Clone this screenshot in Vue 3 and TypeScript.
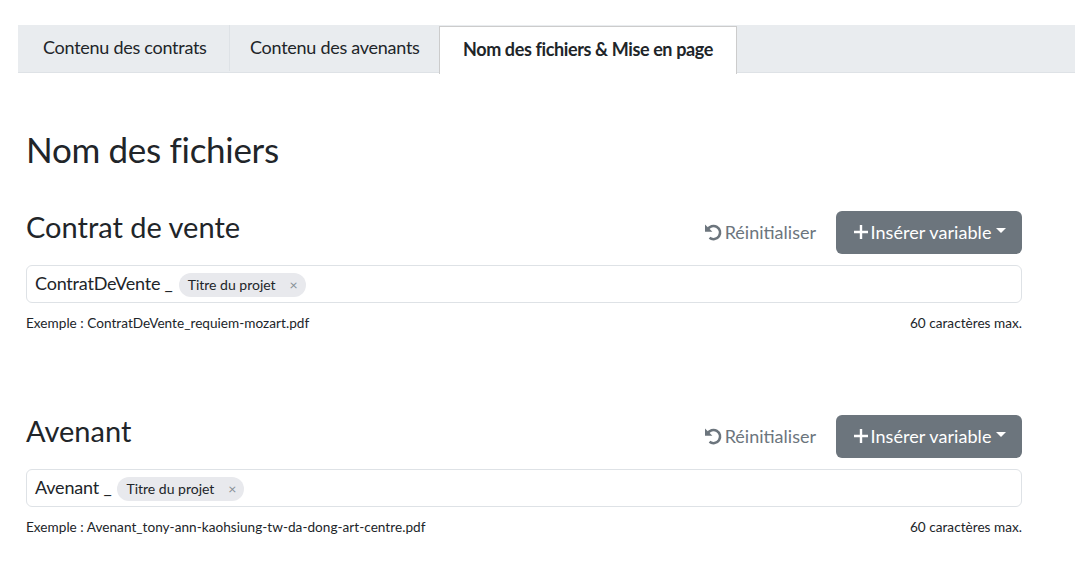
<script setup lang="ts">
interface Section {
  title: string
  prefix: string
  example: string
}

const sections: Section[] = [
  { title: 'Contrat de vente', prefix: 'ContratDeVente _', example: 'Exemple : ContratDeVente_requiem-mozart.pdf' },
  { title: 'Avenant', prefix: 'Avenant _', example: 'Exemple : Avenant_tony-ann-kaohsiung-tw-da-dong-art-centre.pdf' },
]
</script>

<template>
  <div class="page">
    <nav class="tabs">
      <a class="tab first">Contenu des contrats</a>
      <a class="tab second">Contenu des avenants</a>
      <a class="tab active">Nom des fichiers &amp; Mise en page</a>
    </nav>
    <main class="content">
      <h1 class="title">Nom des fichiers</h1>
      <section v-for="s in sections" :key="s.title" class="section">
        <div class="head">
          <h2 class="subtitle">{{ s.title }}</h2>
          <div class="actions">
            <button class="reset" type="button">
              <svg class="reset-icon" viewBox="0 0 18 18" width="18" height="18" fill="none" stroke="currentColor" stroke-width="2.5">
                <path d="M3.6 6.6A6.6 6.6 0 1 1 5.5 14.8" />
                <path d="M1 1.4v7.4h7.4z" fill="currentColor" stroke="none" />
              </svg>
              <span>Réinitialiser</span>
            </button>
            <button class="insert" type="button">
              <svg class="plus" viewBox="0 0 16 16" width="16" height="16" stroke="currentColor" stroke-width="2.4">
                <path d="M8 1v14M1 8h14" />
              </svg>
              <span class="insert-label">Insérer variable</span>
              <i class="caret"></i>
            </button>
          </div>
        </div>
        <div class="field">
          <span class="prefix">{{ s.prefix }}</span>
          <span class="chip">
            <span>Titre du projet</span>
            <span class="chip-x">×</span>
          </span>
        </div>
        <div class="hints">
          <span>{{ s.example }}</span>
          <span>60 caractères max.</span>
        </div>
      </section>
    </main>
  </div>
</template>

<style>
html, body { margin: 0; background: #fff; }
</style>

<style scoped>
.page {
  height: 571px;
  overflow: hidden;
  padding-top: 25px;
  box-sizing: border-box;
  font-family: Lato, "Liberation Sans", sans-serif;
  color: #212529;
}
.tabs {
  display: flex;
  margin-left: 18px;
  height: 47px;
  background: #e9ecef;
  border-bottom: 1px solid #dee2e6;
}
.tab {
  display: flex;
  align-items: center;
  font-size: 18px;
  letter-spacing: -0.27px;
  height: 46px;
  padding-bottom: 2px;
  box-sizing: border-box;
}
.first {
  width: 212px;
  padding-left: 25px;
  border-right: 1px solid #dee2e6;
}
.second {
  width: 209px;
  padding-left: 20px;
}
.active {
  width: 298px;
  height: 48px;
  margin-top: 1px;
  padding: 0 0 4px 23px;
  background: #fff;
  border: 1px solid #ccc;
  border-bottom: none;
  font-weight: 700;
  letter-spacing: -0.38px;
}
.content {
  padding: 0 53px 0 26px;
}
.title {
  margin: 52px 0 0;
  font-size: 35px;
  letter-spacing: -0.3px;
  line-height: 48px;
  font-weight: 400;
}
.section {
  margin-top: 38px;
}
.section + .section {
  margin-top: 83px;
}
.head {
  display: flex;
  justify-content: space-between;
  align-items: center;
  height: 43px;
  margin-bottom: 11px;
}
.subtitle {
  margin: -11px 0 0;
  font-size: 29px;
  line-height: 34px;
  font-weight: 400;
}
.actions {
  display: flex;
  align-items: center;
  gap: 20px;
}
.reset, .insert {
  display: flex;
  align-items: center;
  border: none;
  font-family: inherit;
  font-size: 18px;
  padding: 0 0 2px;
}
.reset {
  color: #6c757d;
  background: none;
  gap: 3px;
}
.reset-icon {
  margin-left: -1px;
  margin-top: 1px;
}
.insert {
  height: 43px;
  width: 186px;
  justify-content: center;
  gap: 3px;
  padding-left: 1px;
  color: #fff;
  background: #6c757d;
  border-radius: 6px;
}
.plus {
  margin-right: -1px;
  margin-top: 1px;
}
.insert-label {
  letter-spacing: 0.06px;
}
.caret {
  width: 0;
  height: 0;
  margin-left: 2px;
  margin-top: -2px;
  border-top: 5px solid #fff;
  border-left: 5px solid transparent;
  border-right: 5px solid transparent;
}
.field {
  display: flex;
  align-items: center;
  height: 38px;
  box-sizing: border-box;
  padding-left: 8px;
  gap: 6px;
  border: 1px solid #dee2e6;
  border-radius: 6px;
  background: #fff;
}
.prefix {
  font-size: 18px;
  letter-spacing: -0.2px;
  margin-top: -2px;
}
.chip {
  display: flex;
  align-items: center;
  justify-content: space-between;
  height: 24px;
  width: 127px;
  box-sizing: border-box;
  margin-top: 2px;
  padding: 0 8px 2px 9px;
  border-radius: 12px;
  background: #e8e9ed;
  font-size: 14px;
}
.chip-x {
  color: #868e96;
  font-size: 14px;
}
.hints {
  display: flex;
  justify-content: space-between;
  margin-top: 12px;
  font-size: 13.6px;
  letter-spacing: 0.02px;
  line-height: 17px;
}
</style>
